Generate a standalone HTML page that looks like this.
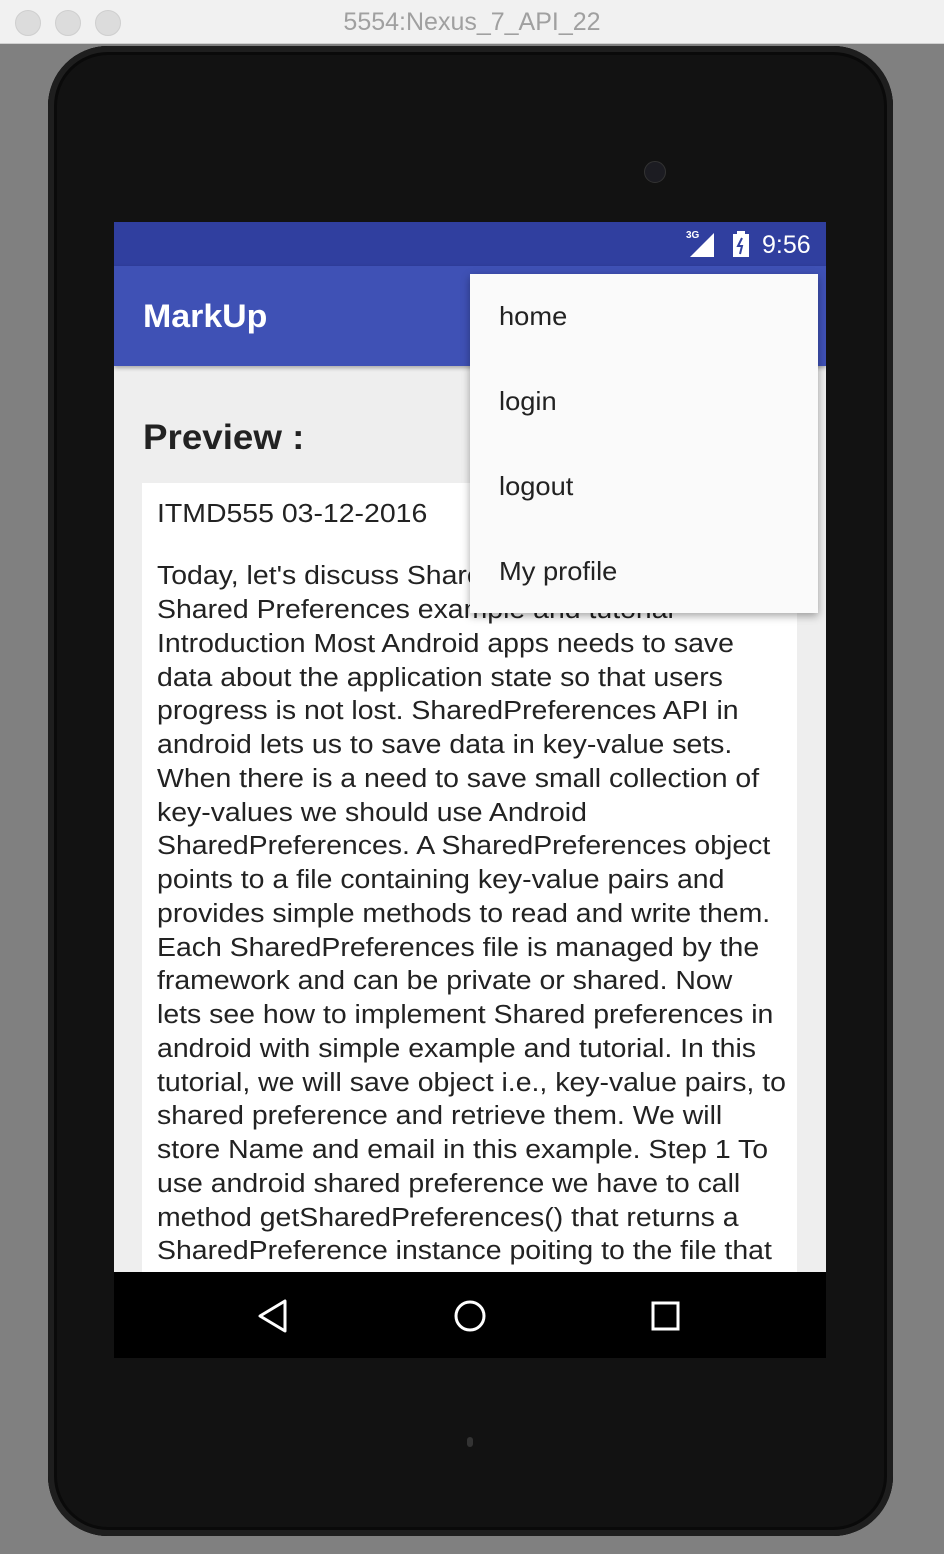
<!DOCTYPE html>
<html><head><style>
body{margin:0;width:944px;height:1564px;background:#808080;position:relative;overflow:hidden;font-family:"Liberation Sans",sans-serif}
.tb{position:absolute;left:0;top:0;width:944px;height:43px;background:#f1f1f1;border-bottom:1px solid #d0d0d0}
.dot{position:absolute;top:10px;width:24px;height:24px;border-radius:50%;background:#dcdcdc;border:1px solid #cfcfcf}
.title{position:absolute;top:8px;width:944px;text-align:center;font-size:25px;color:#a0a0a0}
.dev{position:absolute;left:48px;top:46px;width:845px;height:1490px;background:#121212;border-radius:60px;box-shadow:inset 0 0 0 6px #1e1e1e,inset 0 0 0 9px #0a0a0a}
.scr{position:absolute;left:114px;top:222px;width:712px;height:1136px;background:#eeeeee;overflow:hidden}
.sb{position:absolute;left:0;top:0;width:712px;height:44px;background:#303f9f}
.ab{position:absolute;left:0;top:44px;width:712px;height:100px;background:#3f51b5;box-shadow:0 2px 4px rgba(0,0,0,.3)}
.card{position:absolute;left:28px;top:261px;width:655px;height:900px;background:#fff}
.t{position:absolute;left:43px;font-size:25.5px;color:#222;white-space:nowrap;line-height:34px;transform:scaleX(1.115);transform-origin:0 0}
.menu{position:absolute;left:356px;top:52px;width:348px;height:339px;background:#fafafa;box-shadow:0 3px 8px rgba(0,0,0,.35)}
.mi{position:absolute;left:29px;font-size:26px;color:#222;transform:scaleX(1.05);transform-origin:0 0}
.nav{position:absolute;left:0;top:1050px;width:712px;height:86px;background:#000}
</style></head><body>
<div class="tb"><div class="dot" style="left:15px"></div><div class="dot" style="left:55px"></div><div class="dot" style="left:95px"></div><div class="title">5554:Nexus_7_API_22</div></div>
<div style="position:absolute;left:0;top:1554px;width:944px;height:10px;background:#fff"></div>
<div class="dev"></div>
<div style="position:absolute;left:644px;top:161px;width:20px;height:20px;border-radius:50%;background:#1c1c22;border:1px solid #333"></div>
<div style="position:absolute;left:467px;top:1437px;width:6px;height:10px;border-radius:3px;background:#333"></div>
<div class="scr">
<div class="sb">
<span style="position:absolute;left:572px;top:8px;font-size:10px;color:#fff;font-weight:bold">3G</span>
<svg style="position:absolute;left:576px;top:11px" width="26" height="24"><path d="M24 0V24H0Z" fill="#fff"/></svg>
<svg style="position:absolute;left:619px;top:9px" width="16" height="26"><rect x="0" y="3" width="16" height="23" fill="#fff"/><rect x="4" y="0" width="8" height="4" fill="#fff"/><path d="M9 7 5 15h4l-2 8" stroke="#303f9f" stroke-width="2" fill="none"/></svg>
<span style="position:absolute;left:648px;top:9px;font-size:25px;color:#fff">9:56</span>
</div>
<div class="ab"><span style="position:absolute;left:29px;top:32px;font-size:32px;color:#fff;font-weight:bold;transform:scaleX(1.06);transform-origin:0 0;display:inline-block">MarkUp</span></div>
<div style="position:absolute;left:29px;top:196px;font-size:35px;font-weight:bold;color:#222;transform:scaleX(1.05);transform-origin:0 0">Preview :</div>
<div class="card"></div>
<div class="t" style="top:275px">ITMD555 03-12-2016</div>
<div class="t" style="top:337px">Today, let's discuss Shared Preferences in</div>
<div class="t" style="top:371px">Shared Preferences example and tutorial</div>
<div class="t" style="top:405px">Introduction Most Android apps needs to save</div>
<div class="t" style="top:439px">data about the application state so that users</div>
<div class="t" style="top:472px">progress is not lost. SharedPreferences API in</div>
<div class="t" style="top:506px">android lets us to save data in key-value sets.</div>
<div class="t" style="top:540px">When there is a need to save small collection of</div>
<div class="t" style="top:574px">key-values we should use Android</div>
<div class="t" style="top:607px">SharedPreferences. A SharedPreferences object</div>
<div class="t" style="top:641px">points to a file containing key-value pairs and</div>
<div class="t" style="top:675px">provides simple methods to read and write them.</div>
<div class="t" style="top:709px">Each SharedPreferences file is managed by the</div>
<div class="t" style="top:742px">framework and can be private or shared. Now</div>
<div class="t" style="top:776px">lets see how to implement Shared preferences in</div>
<div class="t" style="top:810px">android with simple example and tutorial. In this</div>
<div class="t" style="top:844px">tutorial, we will save object i.e., key-value pairs, to</div>
<div class="t" style="top:877px">shared preference and retrieve them. We will</div>
<div class="t" style="top:911px">store Name and email in this example. Step 1 To</div>
<div class="t" style="top:945px">use android shared preference we have to call</div>
<div class="t" style="top:979px">method getSharedPreferences() that returns a</div>
<div class="t" style="top:1012px">SharedPreference instance poiting to the file that</div>
<div class="menu">
<div class="mi" style="top:27px">home</div>
<div class="mi" style="top:112px">login</div>
<div class="mi" style="top:197px">logout</div>
<div class="mi" style="top:282px">My profile</div>
</div>
<div class="nav">
<svg style="position:absolute;left:143px;top:27px" width="32" height="34"><path d="M28 2V32L3 17Z" fill="none" stroke="#fff" stroke-width="3" stroke-linejoin="round"/></svg>
<svg style="position:absolute;left:339px;top:27px" width="34" height="34"><circle cx="17" cy="17" r="14" fill="none" stroke="#fff" stroke-width="3"/></svg>
<svg style="position:absolute;left:537px;top:29px" width="30" height="30"><rect x="2" y="2" width="25" height="26" fill="none" stroke="#fff" stroke-width="3"/></svg>
</div>
</div>
</body></html>
